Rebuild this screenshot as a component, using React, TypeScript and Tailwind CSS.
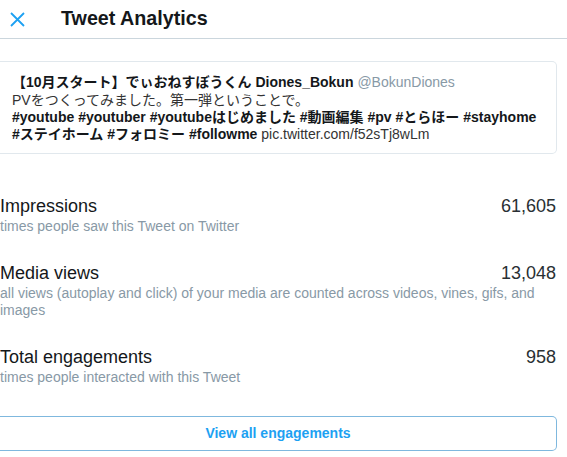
const metrics = [
  { label: "Impressions", value: "61,605", note: "times people saw this Tweet on Twitter" },
  {
    label: "Media views",
    value: "13,048",
    note: "all views (autoplay and click) of your media are counted across videos, vines, gifs, and images",
  },
  { label: "Total engagements", value: "958", note: "times people interacted with this Tweet" },
];

const tags = ["#youtube", "#youtuber", "#youtubeはじめました", "#動画編集", "#pv", "#とらほー", "#stayhome", "#ステイホーム", "#フォロミー", "#followme"];

export default function App() {
  return (
    <div
      className="h-[457px] w-[567px] overflow-hidden bg-white text-[#14171a]"
      style={{ fontFamily: '"Liberation Sans", "Noto Sans CJK JP", Arial, sans-serif' }}
    >
      <header className="flex h-[39px] items-center border-b border-[#cbd6dd]">
        <button type="button" className="ml-[10px] text-[#1da1f2]">
          <svg width="15" height="15" viewBox="0 0 15 15" fill="none" stroke="currentColor" strokeWidth="1.8">
            <path d="M1 1L14 14M14 1L1 14" />
          </svg>
        </button>
        <h1 className="ml-[36px] text-[19.7px] font-bold">Tweet Analytics</h1>
      </header>

      <div className="mr-[10px]">
        <div className="mt-[22px] rounded-r-[5px] border border-l-0 border-[#e1e8ed] pb-[10px] pl-[12px] pr-[10px] pt-[12px] text-[14px] leading-[17px]">
          <p>
            <span className="font-bold">【10月スタート】でぃおねすぼうくん Diones_Bokun</span>{" "}
            <span className="text-[#8899a6]">@BokunDiones</span>
          </p>
          <p className="mt-[1px] text-[#333]">
            PVをつくってみました。第一弾ということで。
            <br />
            {tags.map((t) => (
              <span key={t} className="font-bold text-[#14171a]">
                {t}{" "}
              </span>
            ))}
            <span>pic.twitter.com/f52sTj8wLm</span>
          </p>
        </div>

        <div className="mt-[41px] flex flex-col gap-[27px]">
          {metrics.map((m) => (
            <div key={m.label}>
              <div className="flex items-baseline justify-between text-[18px] leading-[23px] text-[#14171a]">
                <span>{m.label}</span>
                <span className="mr-px text-[#292f33]">{m.value}</span>
              </div>
              <p className="text-[14px] leading-[17px] text-[#8899a6]">{m.note}</p>
            </div>
          ))}
        </div>

        <button
          type="button"
          className="mt-[30px] h-[35px] w-full rounded-r-[5px] border border-l-0 border-[#7fb8de] text-[14px] font-bold text-[#1da1f2]"
        >
          View all engagements
        </button>
      </div>
    </div>
  );
}
